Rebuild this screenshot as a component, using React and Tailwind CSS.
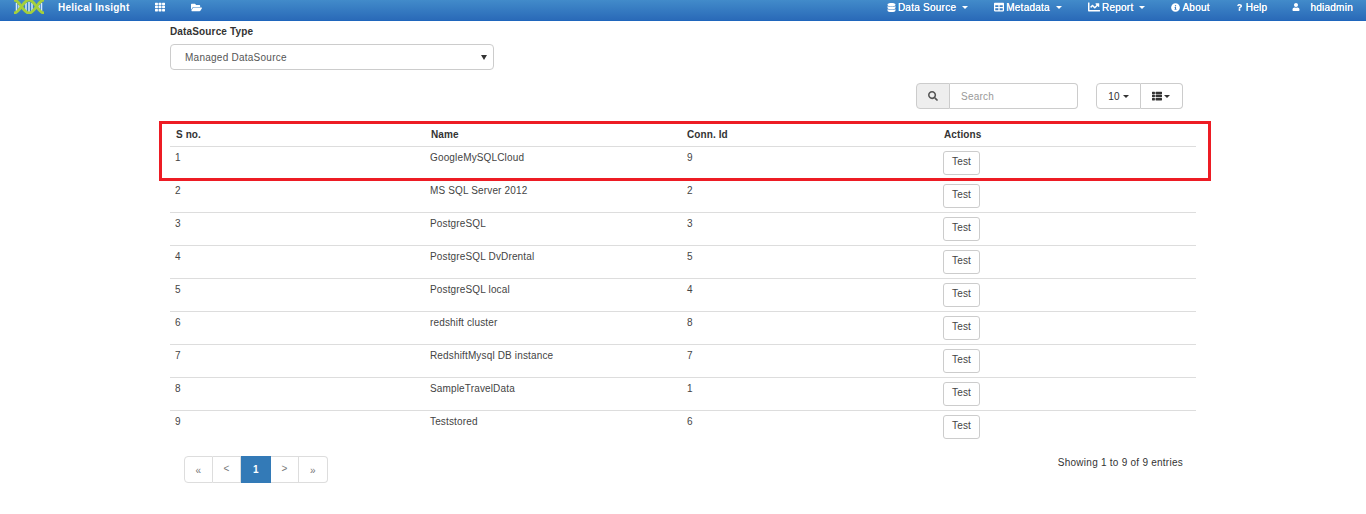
import React from "react";
import { FaDatabase, FaTable, FaChartLine, FaInfoCircle, FaQuestion, FaUser, FaTh, FaFolderOpen, FaSearch, FaThList } from "react-icons/fa";

const rows = [
  [1, "GoogleMySQLCloud", 9],
  [2, "MS SQL Server 2012", 2],
  [3, "PostgreSQL", 3],
  [4, "PostgreSQL DvDrental", 5],
  [5, "PostgreSQL local", 4],
  [6, "redshift cluster", 8],
  [7, "RedshiftMysql DB instance", 7],
  [8, "SampleTravelData", 1],
  [9, "Teststored", 6],
];

function Caret({ className = "" }) {
  return <span className={`inline-block w-0 h-0 border-x-[3px] border-x-transparent border-t-[3px] border-t-current ${className}`} />;
}

function NavItem({ icon, label, caret, className = "" }) {
  return (
    <div className={`flex items-center text-white text-[10px] tracking-[0.25px] [text-shadow:0_0_0.6px_#ffffff] ${className}`}>
      {icon}
      <span>{label}</span>
      {caret && <Caret className="ml-[6px]" />}
    </div>
  );
}

function Logo() {
  return (
    <svg width="30" height="14" viewBox="0 0 30 14" className="ml-[14px] -mt-[1px]">
      <path d="M2.500 3v8M5 5v4M12 3v8M15 2v10M18 3v8M25 5v4M27.500 3v8" stroke="#d6eafc" strokeWidth="1.500" />
      <path d="M0 0 C6 0 9 13 15 13 C21 13 24 0 30 0" fill="none" stroke="#a4cf3c" strokeWidth="3" />
      <path d="M0 13 C6 13 9 0 15 0 C21 0 24 13 30 13" fill="none" stroke="#a4cf3c" strokeWidth="3" />
    </svg>
  );
}

export default function App() {
  return (
    <div className="relative w-[1366px] h-[514px] bg-white overflow-hidden font-['Liberation_Sans',Arial,sans-serif] text-[10px] tracking-[0.25px] text-[#333]">
      <header className="flex items-center h-[21px] pb-[6px] pt-0 bg-gradient-to-b from-[#428bca] to-[#2a6ab8] border-b border-[#1f66bd]">
        <Logo />
        <span className="ml-[14px] text-white font-bold text-[10px]">Helical Insight</span>
        <FaTh className="ml-[25px] text-white" size={10} />
        <FaFolderOpen className="ml-[26px] text-white" size={11} />
        <div className="ml-auto flex items-center mr-[13px]">
          <NavItem icon={<FaDatabase size={9} className="mr-[2px]" />} label="Data Source" caret />
          <NavItem className="ml-[26px]" icon={<FaTable size={10} className="mr-[2px]" />} label="Metadata" caret />
          <NavItem className="ml-[26px]" icon={<FaChartLine size={12} className="mr-[2px]" />} label="Report" caret />
          <NavItem className="ml-[26px]" icon={<FaInfoCircle size={9} className="mr-[2px]" />} label="About" />
          <NavItem className="ml-[26px]" icon={<FaQuestion size={7} className="mr-[3px]" />} label="Help" />
          <NavItem className="ml-[25px]" icon={<FaUser size={8} className="mr-[10px]" />} label="hdiadmin" />
        </div>
      </header>

      <main className="ml-[170px] w-[1026px]">
        <div className="mt-[4px] font-bold leading-[14px] tracking-[0.15px]">DataSource Type</div>
        <div className="mt-[5px] flex items-center justify-between w-[324px] h-[26px] pl-[14px] pr-[6px] rounded-[4px] border border-[#ccc] text-[#555]">
          <span>Managed DataSource</span>
          <Caret className="border-x-[2.5px] border-t-[5px] text-[#333]" />
        </div>

        <div className="mt-[13px] flex justify-end pr-[13px] h-[26px]">
          <div className="flex">
            <div className="flex items-center justify-center w-[34px] bg-[#eee] border border-[#ccc] rounded-l-[4px] text-[#555]">
              <FaSearch size={10} />
            </div>
            <div className="flex items-center w-[128px] pl-[11px] border border-l-0 border-[#ccc] rounded-r-[4px] text-[#999]">Search</div>
          </div>
          <div className="flex ml-[18px]">
            <div className="flex items-center justify-center w-[45px] border border-[#ccc] rounded-l-[4px]">
              10<Caret className="ml-[3px]" />
            </div>
            <div className="flex items-center justify-center w-[42px] pr-[1px] border border-l-0 border-[#ccc] rounded-r-[4px]">
              <FaThList size={10} /><Caret className="ml-[2px]" />
            </div>
          </div>
        </div>

        <div className="mt-[12px]">
          <div className="grid grid-cols-4 h-[26px] border-b border-[#ddd] font-bold text-[#333] tracking-[0.1px]">
            <div className="pl-[6px] pt-[8px] leading-[12px]">S no.</div>
            <div className="pl-[4.500px] pt-[8px] leading-[12px]">Name</div>
            <div className="pl-[4px] pt-[8px] leading-[12px]">Conn. Id</div>
            <div className="pl-[4.500px] pt-[8px] leading-[12px]">Actions</div>
          </div>
          {rows.map((r) => (
            <div key={r[0]} className="grid grid-cols-4 h-[33px] border-b border-[#ddd] last:border-b-0 tracking-[0.15px] text-[#444]">
              <div className="pl-[5px] pt-[5px] leading-[12px]">{r[0]}</div>
              <div className="pl-[3.500px] pt-[5px] leading-[12px]">{r[1]}</div>
              <div className="pl-[4px] pt-[5px] leading-[12px]">{r[2]}</div>
              <div className="pl-[3.500px] pt-[4px]">
                <div className="flex items-center justify-center pb-[3px] w-[37px] h-[24px] rounded-[3px] border border-[#ccc]">Test</div>
              </div>
            </div>
          ))}
        </div>

        <div className="flex justify-between items-start">
          <div className="ml-[14px] mt-[12px] flex h-[27px] text-[#337ab7]">
            <div className="flex items-center justify-center pt-[2px] w-[29px] border border-[#ddd] rounded-l-[4px] text-[#777]">«</div>
            <div className="flex items-center justify-center pb-[2px] w-[28px] border border-l-0 border-[#ddd] text-[#777]">&lt;</div>
            <div className="flex items-center justify-center pb-[1px] w-[30px] bg-[#337ab7] text-white font-bold">1</div>
            <div className="flex items-center justify-center pb-[2px] w-[28px] border border-l-0 border-[#ddd] text-[#777]">&gt;</div>
            <div className="flex items-center justify-center pt-[2px] w-[29px] border border-l-0 border-[#ddd] rounded-r-[4px] text-[#777]">»</div>
          </div>
          <div className="mt-[13px] mr-[13px] leading-[12px]">Showing 1 to 9 of 9 entries</div>
        </div>
      </main>

      <div className="absolute left-[159px] top-[121px] w-[1052px] h-[60px] border-[3px] border-[#ed1c24] pointer-events-none" />
    </div>
  );
}
